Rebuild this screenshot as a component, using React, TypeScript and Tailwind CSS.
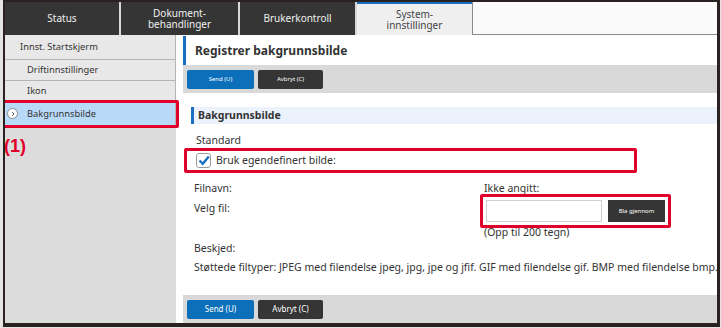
const tabs = [
  { label: ["Status"], w: "w-[116px]" },
  { label: ["Dokument-", "behandlinger"], w: "w-[119px]" },
  { label: ["Brukerkontroll"], w: "w-[117px]" },
];

const menu = [
  { label: "Innst. Startskjerm", indent: false, h: "h-[25px]" },
  { label: "Driftinnstillinger", indent: true, h: "h-[21px]" },
  { label: "Ikon", indent: true, h: "h-[21px]" },
];

function Toolbar({ big }: { big?: boolean }) {
  const txt = big ? "text-[8px]" : "text-[6px]";
  return (
    <div className="flex h-[28px] items-center gap-[4px] bg-[#d9d9d9] pl-[4px]">
      <button className={`h-[19px] w-[67px] rounded-[2px] bg-[#0b6fba] text-white ${txt}`}>Send (U)</button>
      <button className={`h-[19px] w-[65px] rounded-[2px] bg-[#353535] text-white ${txt}`}>Avbryt (C)</button>
    </div>
  );
}

export default function App() {
  return (
    <div className="h-[328px] w-[721px] bg-[#e4e4e4] pl-[3px] font-['Noto_Sans',sans-serif] text-[#333]">
      <div className="flex h-[327px] w-[717px] flex-col overflow-hidden border-b-4 border-l-2 border-r-[3px] border-t-2 border-[#2a2121] bg-white">
        {/* tab bar */}
        <div className="flex h-[33px] shrink-0 bg-[#353535]">
          {tabs.map((t) => (
            <div
              key={t.label[0]}
              className={`flex ${t.w} flex-col items-center justify-center border-r-2 border-[#d8d8d8] text-[10px] leading-[11px] text-[#f0f0f0]`}
            >
              {t.label.map((l) => (
                <span key={l}>{l}</span>
              ))}
            </div>
          ))}
          <div className="flex w-[115px] flex-col items-center justify-center border-t-2 border-[#1a6fc0] bg-[#efefef] text-[10px] leading-[11px] text-[#444]">
            <span>System-</span>
            <span>innstillinger</span>
          </div>
          <div className="flex-1 border-b border-l border-[#8a8a8a] bg-[#fafafa]" />
        </div>

        <div className="flex min-h-0 flex-1">
          {/* sidebar */}
          <div className="w-[171px] shrink-0 bg-[#dcdcdc]">
            {menu.map((m) => (
              <div
                key={m.label}
                className={`flex ${m.h} items-center border-b border-r border-[#b4b4b4] bg-[#e8e8e8] text-[9.3px] ${m.indent ? "pl-[22px]" : "pl-[15px]"}`}
              >
                {m.label}
              </div>
            ))}
            <div className="relative flex h-[24px] items-center border-b border-r border-[#b4b4b4] bg-[#b9d9f8] pl-[22px] text-[9.3px]">
              <span className="absolute left-[2px] top-[6px] flex h-[11px] w-[11px] items-center justify-center rounded-full border border-[#888] bg-white">
                <svg width="6" height="6" viewBox="0 0 6 6">
                  <path d="M2 1 L4 3 L2 5" fill="none" stroke="#666" strokeWidth="1" />
                </svg>
              </span>
              Bakgrunnsbilde
              <div className="absolute -left-[3px] -right-[4px] -top-[2px] -bottom-[3px] rounded-[2px] border-[3px] border-[#e1002b]" />
            </div>
            <div className="mt-[10px] -ml-[1px] font-['Liberation_Sans',sans-serif] text-[18px] font-bold leading-[20px] text-[#e1002b]">(1)</div>
          </div>

          {/* main */}
          <div className="flex min-w-0 flex-1 flex-col pl-[7px] pt-[1px]">
            <div className="flex h-[29px] shrink-0 items-center border-l-[3px] border-[#1a6fc0] pl-[9px] text-[12px] font-bold">
              Registrer bakgrunnsbilde
            </div>
            <Toolbar />

            <div className="ml-[8px] mt-[14px] flex h-[17px] shrink-0 items-center border-l-[3px] border-[#1a6fc0] bg-[#ebf2fc] pl-[4px] text-[10.5px] font-bold">
              Bakgrunnsbilde
            </div>

            <div className="ml-[13px] mt-[9px] text-[10.5px] leading-[14px]">Standard</div>
            <div className="ml-[1px] mt-[1px] flex h-[25px] w-[453px] shrink-0 items-center rounded-[2px] border-[3px] border-[#e1002b] pl-[9px] text-[10.5px]">
              <span className="mr-[5px] flex h-[15px] w-[15px] items-center justify-center rounded-[3px] border border-[#9a9a9a] bg-white">
                <svg width="12" height="11" viewBox="0 0 12 11">
                  <path d="M1.5 5.5 L4.8 8.8 L10.8 1.5" fill="none" stroke="#1a6fc0" strokeWidth="2.4" />
                </svg>
              </span>
              Bruk egendefinert bilde:
            </div>

            <div className="mt-[8px] flex text-[10.5px] leading-[14px]">
              <div className="w-[297px] pl-[11px]">
                <div>Filnavn:</div>
                <div className="mt-[6px]">Velg fil:</div>
              </div>
              <div className="flex flex-col">
                <div className="pl-[4px]">Ikke angitt:</div>
                <div className="-mt-[1px] flex h-[34px] w-[191px] items-center gap-[6px] rounded-[2px] border-[3px] border-[#e1002b] pl-[3px]">
                  <div className="h-[22px] w-[116px] border border-[#cfcfcf] bg-white" />
                  <div className="flex h-[22px] w-[57px] items-center justify-center bg-[#353535] text-[6px] text-white">Bla gjennom</div>
                </div>
                <div className="-mt-[3px] pl-[4px]">(Opp til 200 tegn)</div>
              </div>
            </div>

            <div className="ml-[11px] mt-[2px] text-[10.5px] leading-[14px]">Beskjed:</div>
            <div className="ml-[11px] mt-[5px] whitespace-nowrap text-[10.5px] leading-[14px]">
              Støttede filtyper: JPEG med filendelse jpeg, jpg, jpe og jfif. GIF med filendelse gif. BMP med filendelse bmp.
            </div>

            <div className="mt-auto">
              <Toolbar big />
            </div>
          </div>
        </div>
      </div>
    </div>
  );
}
